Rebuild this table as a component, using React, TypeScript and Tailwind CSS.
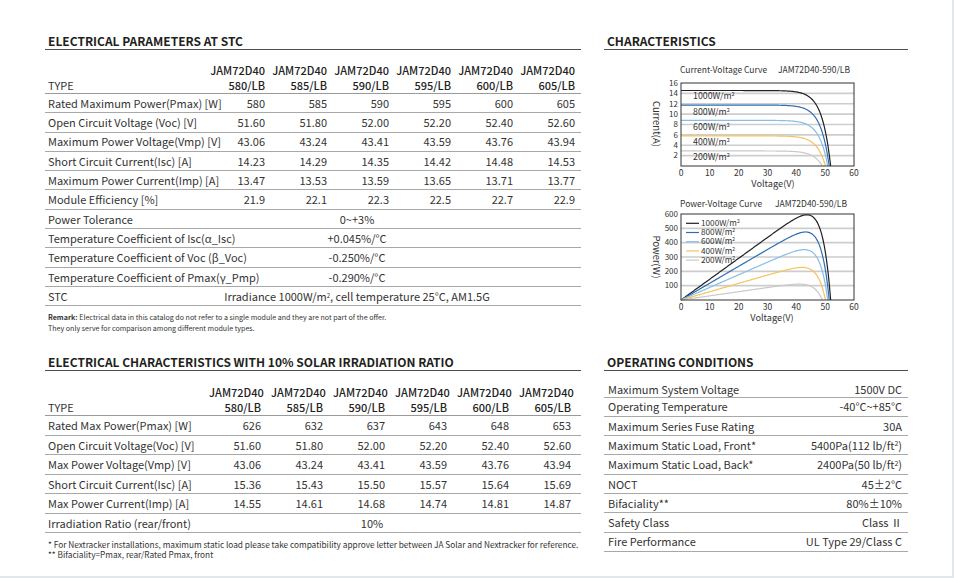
import React from 'react';

const models = ['580/LB', '585/LB', '590/LB', '595/LB', '600/LB', '605/LB'];

const stcRows: [string, string[]][] = [
    ['Rated Maximum Power(Pmax) [W]', ['580', '585', '590', '595', '600', '605']],
    ['Open Circuit Voltage (Voc) [V]', ['51.60', '51.80', '52.00', '52.20', '52.40', '52.60']],
    ['Maximum Power Voltage(Vmp) [V]', ['43.06', '43.24', '43.41', '43.59', '43.76', '43.94']],
    ['Short Circuit Current(Isc) [A]', ['14.23', '14.29', '14.35', '14.42', '14.48', '14.53']],
    ['Maximum Power Current(Imp) [A]', ['13.47', '13.53', '13.59', '13.65', '13.71', '13.77']],
    ['Module Efficiency [%]', ['21.9', '22.1', '22.3', '22.5', '22.7', '22.9']],
];

const stcMerged: [string, React.ReactNode][] = [
    ['Power Tolerance', '0~+3%'],
    ['Temperature Coefficient of Isc(α_Isc)', '+0.045%/°C'],
    ['Temperature Coefficient of Voc (β_Voc)', '-0.250%/°C'],
    ['Temperature Coefficient of Pmax(γ_Pmp)', '-0.290%/°C'],
    [
        'STC',
        <>
            Irradiance 1000W/m<sup className="text-[6px]">2</sup>, cell temperature 25°C, AM1.5G
        </>,
    ],
];

const bifiRows: [string, string[]][] = [
    ['Rated Max Power(Pmax) [W]', ['626', '632', '637', '643', '648', '653']],
    ['Open Circuit Voltage(Voc) [V]', ['51.60', '51.80', '52.00', '52.20', '52.40', '52.60']],
    ['Max Power Voltage(Vmp) [V]', ['43.06', '43.24', '43.41', '43.59', '43.76', '43.94']],
    ['Short Circuit Current(Isc) [A]', ['15.36', '15.43', '15.50', '15.57', '15.64', '15.69']],
    ['Max Power Current(Imp) [A]', ['14.55', '14.61', '14.68', '14.74', '14.81', '14.87']],
];

const operating: [string, React.ReactNode][] = [
    ['Maximum System Voltage', '1500V DC'],
    ['Operating Temperature', '-40°C~+85°C'],
    ['Maximum Series Fuse Rating', '30A'],
    [
        'Maximum Static Load, Front*',
        <>
            5400Pa(112 lb/ft<sup className="text-[7px]">2</sup>)
        </>,
    ],
    [
        'Maximum Static Load, Back*',
        <>
            2400Pa(50 lb/ft<sup className="text-[7px]">2</sup>)
        </>,
    ],
    ['NOCT', '45±2°C'],
    ['Bifaciality**', '80%±10%'],
    ['Safety Class', 'Class Ⅱ'],
    ['Fire Performance', 'UL Type 29/Class C'],
];

const curves = [
    { label: '1000W/m', isc: 14.55, voc: 51.9, color: '#231f20' },
    { label: '800W/m', isc: 11.75, voc: 51.4, color: '#2e6db5' },
    { label: '600W/m', isc: 8.8, voc: 50.9, color: '#86bde9' },
    { label: '400W/m', isc: 5.8, voc: 50.1, color: '#f7c35c' },
    { label: '200W/m', isc: 2.9, voc: 49.0, color: '#c9c9c9' },
];

const current = (isc: number, voc: number, v: number) =>
    Math.max(0, isc * (1 - Math.exp((v - voc) / 3)));

const vx = (v: number) => 681 + (v * 173) / 60;

const SectionTitle = ({ title }: { title: string }) => (
    <div className="pl-[3px] text-[12px] leading-[16px] font-bold text-[#231f20] border-b border-[#4d4d4d]">
        {title}
    </div>
);

const ValueHeader = ({ right }: { right: string }) => (
    <div className="grid grid-cols-[164px_repeat(6,62px)] h-[44px] items-end border-b border-[#9a9a9a] leading-[15px]">
        <div className="pl-[3px] text-[#333]">TYPE</div>
        {models.map((m) => (
            <div key={m} className={`text-right font-medium text-[#222] ${right}`}>
                <div>JAM72D40</div>
                <div>{m}</div>
            </div>
        ))}
    </div>
);

const Charts = () => {
    const ivY = (i: number) => 166 - (i * 83) / 16;
    const pvY = (p: number) => 300 - (p * 86) / 600;

    const pts = (isc: number, voc: number, power: boolean) => {
        const out: string[] = [];
        for (let v = 0; v <= voc; v += 0.25) {
            const i = current(isc, voc, v);
            out.push(`${vx(v).toFixed(2)},${(power ? pvY(v * i) : ivY(i)).toFixed(2)}`);
        }
        out.push(`${vx(voc).toFixed(2)},${power ? 300 : 166}`);
        return out.join(' ');
    };

    const ivLabelY = [96, 112, 127, 142, 157];

    return (
        <svg
            width={304}
            height={290}
            viewBox="604 50 304 290"
            className="block"
            fontFamily="'Noto Sans CJK SC', sans-serif"
            fill="#333"
        >
            {/* current-voltage */}
            <text x={680} y={73} fontSize={8.5}>Current-Voltage Curve</text>
            <text x={778} y={73} fontSize={8.5}>JAM72D40-590/LB</text>
            {[2, 4, 6, 8, 10, 12, 14].map((i) => (
                <line key={i} x1={681} x2={854} y1={ivY(i)} y2={ivY(i)} stroke="#cdcdcd" strokeWidth={1.6} />
            ))}
            {[16, 14, 12, 10, 8, 6, 4, 2].map((i) => (
                <text key={i} x={678} y={ivY(i) + 2.8} fontSize={8} textAnchor="end">
                    {i}
                </text>
            ))}
            {curves.map((c) => (
                <polyline key={c.label} points={pts(c.isc, c.voc, false)} fill="none" stroke={c.color} strokeWidth={1.2} />
            ))}
            {curves.map((c, k) => (
                <text key={c.label} x={693} y={ivLabelY[k] + 3.2} fontSize={8.8}>
                    {c.label}
                    <tspan fontSize={5.5} dy={-3.5}>2</tspan>
                </text>
            ))}
            <rect x={681} y={83} width={173} height={83} fill="none" stroke="#333" strokeWidth={1} />
            {[0, 10, 20, 30, 40, 50, 60].map((v) => (
                <text key={v} x={vx(v)} y={175.5} fontSize={8.5} textAnchor="middle">
                    {v}
                </text>
            ))}
            <text x={773} y={186.5} fontSize={9.2} textAnchor="middle">Voltage(V)</text>
            <text transform="translate(653,124) rotate(90)" fontSize={9.5} textAnchor="middle">
                Current(A)
            </text>

            {/* power-voltage */}
            <text x={680} y={207} fontSize={8.5}>Power-Voltage Curve</text>
            <text x={775} y={207} fontSize={8.5}>JAM72D40-590/LB</text>
            {[100, 200, 300, 400, 500].map((p) => (
                <line key={p} x1={681} x2={854} y1={pvY(p)} y2={pvY(p)} stroke="#cdcdcd" strokeWidth={1.6} />
            ))}
            {[600, 500, 400, 300, 200, 100].map((p) => (
                <text key={p} x={678} y={pvY(p) + 2.8} fontSize={8} textAnchor="end">
                    {p}
                </text>
            ))}
            {curves.map((c) => (
                <polyline key={c.label} points={pts(c.isc, c.voc, true)} fill="none" stroke={c.color} strokeWidth={1.2} />
            ))}
            {curves.map((c, k) => (
                <g key={c.label}>
                    <line x1={686} x2={699} y1={223.3 + k * 9.2} y2={223.3 + k * 9.2} stroke={c.color} strokeWidth={1.2} />
                    <text x={701} y={226 + k * 9.2} fontSize={8.2}>
                        {c.label}
                        <tspan fontSize={5} dy={-3}>2</tspan>
                    </text>
                </g>
            ))}
            <rect x={681} y={214} width={173} height={86} fill="none" stroke="#333" strokeWidth={1} />
            {[0, 10, 20, 30, 40, 50, 60].map((v) => (
                <text key={v} x={vx(v)} y={310} fontSize={8.5} textAnchor="middle">
                    {v}
                </text>
            ))}
            <text x={772} y={320.5} fontSize={9.2} textAnchor="middle">Voltage(V)</text>
            <text transform="translate(653,257) rotate(90)" fontSize={9.5} textAnchor="middle">
                Power(W)
            </text>
        </svg>
    );
};

export default function App() {
    return (
        <div className="w-[954px] h-[578px] bg-white font-['Noto_Sans_CJK_SC',sans-serif] text-[#333] border-r-2 border-b-2 border-[#e1e7ea] overflow-hidden">
            {/* top half */}
            <div className="flex h-[354px] pl-[45px] gap-[23px]">
                <div className="w-[536px] pt-[33px]">
                    <SectionTitle title="ELECTRICAL PARAMETERS AT STC" />
                    <div className="text-[11px]">
                        <ValueHeader right="pr-[6px]" />
                        {stcRows.map(([label, vals]) => (
                            <div
                                key={label}
                                className="grid grid-cols-[164px_repeat(6,62px)] h-[19.3px] items-center border-b border-[#a8a8a8]"
                            >
                                <div className="pl-[3px] whitespace-nowrap">{label}</div>
                                {vals.map((v, i) => (
                                    <div key={i} className="text-right pr-[6px]">
                                        {v}
                                    </div>
                                ))}
                            </div>
                        ))}
                        {stcMerged.map(([label, val]) => (
                            <div
                                key={label}
                                className="grid grid-cols-[164px_372px] h-[19.3px] items-center border-b border-[#a8a8a8]"
                            >
                                <div className="pl-[3px] whitespace-nowrap">{label}</div>
                                <div className="text-center pr-[76px] whitespace-nowrap">{val}</div>
                            </div>
                        ))}
                    </div>
                    <div className="mt-[6px] pl-[3px] text-[7.1px] leading-[11px] text-[#333] whitespace-nowrap">
                        <div>
                            <span className="font-bold">Remark:</span> Electrical data in this catalog do not refer to a
                            single module and they are not part of the offer.
                        </div>
                        <div>They only serve for comparison among different module types.</div>
                    </div>
                </div>
                <div className="w-[304px] pt-[33px]">
                    <SectionTitle title="CHARACTERISTICS" />
                    <Charts />
                </div>
            </div>

            {/* bottom half */}
            <div className="flex pl-[45px] gap-[23px]">
                <div className="w-[536px]">
                    <SectionTitle title="ELECTRICAL CHARACTERISTICS WITH 10% SOLAR IRRADIATION RATIO" />
                    <div className="text-[11px]">
                        <div className="h-[1px]" />
                        <ValueHeader right="pr-[10px]" />
                        {bifiRows.map(([label, vals]) => (
                            <div
                                key={label}
                                className="grid grid-cols-[164px_repeat(6,62px)] h-[19.5px] items-center border-b border-[#a8a8a8]"
                            >
                                <div className="pl-[3px] whitespace-nowrap">{label}</div>
                                {vals.map((v, i) => (
                                    <div key={i} className="text-right pr-[10px]">
                                        {v}
                                    </div>
                                ))}
                            </div>
                        ))}
                        <div className="grid grid-cols-[164px_372px] h-[19.5px] items-center border-b border-[#a8a8a8]">
                            <div className="pl-[3px]">Irradiation Ratio (rear/front)</div>
                            <div className="text-center pr-[46px]">10%</div>
                        </div>
                    </div>
                    <div className="mt-[6px] pl-[3px] text-[8.25px] leading-[10px] whitespace-nowrap">
                        <div>
                            * For Nextracker installations, maximum static load please take compatibility approve letter
                            between JA Solar and Nextracker for reference.
                        </div>
                        <div>** Bifaciality=Pmax, rear/Rated Pmax, front</div>
                    </div>
                </div>
                <div className="w-[304px]">
                    <SectionTitle title="OPERATING CONDITIONS" />
                    <div className="text-[11px]">
                        {operating.map(([label, val], i) => (
                            <div
                                key={label}
                                className={`flex justify-between pl-[4px] pr-[6px] border-b border-[#a8a8a8] ${
                                    i === 0 ? 'h-[26.5px] items-end leading-[15px]' : 'h-[19.3px] items-center'
                                }`}
                            >
                                <span>{label}</span>
                                <span>{val}</span>
                            </div>
                        ))}
                    </div>
                </div>
            </div>
        </div>
    );
}
